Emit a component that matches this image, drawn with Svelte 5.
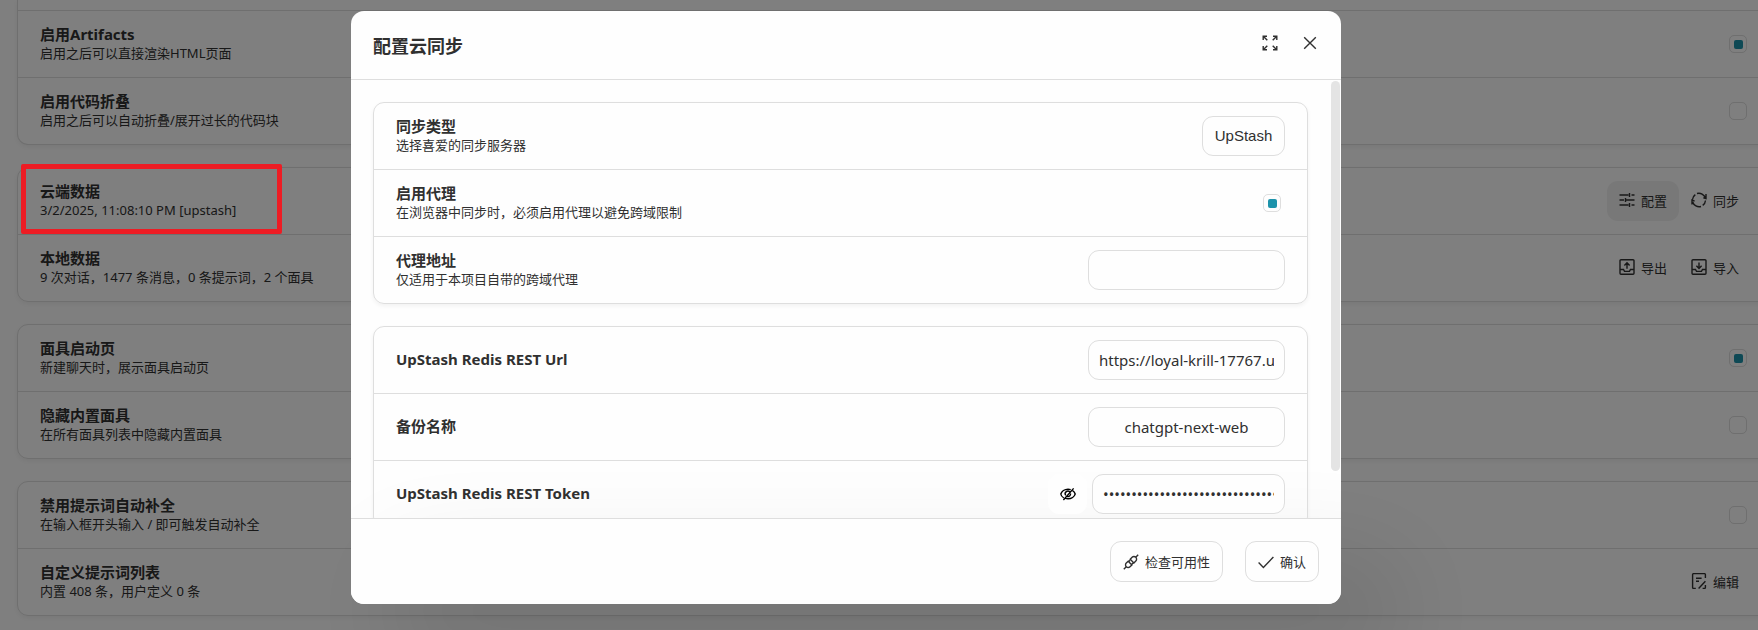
<script>
  let modalOpen = true;

  let syncType = 'UpStash';
  let useProxy = true;
  let proxyUrl = '';
  let restUrl = 'https://loyal-krill-17767.upstash.io';
  let backupName = 'chatgpt-next-web';
  let token = 'AUVnAAIjcDEwZTM5Yjg3ZmQ2NGE0OWQ';
  let showToken = false;

  let groups = [
    {
      continued: true,
      rows: [
        { id: 'artifacts', title: '启用Artifacts', sub: '启用之后可以直接渲染HTML页面', checked: true },
        { id: 'folding', title: '启用代码折叠', sub: '启用之后可以自动折叠/展开过长的代码块', checked: false }
      ]
    },
    {
      rows: [
        {
          id: 'cloud',
          title: '云端数据',
          sub: '3/2/2025, 11:08:10 PM [upstash]',
          marked: true,
          actions: [
            { icon: 'config', text: '配置', active: true },
            { icon: 'sync', text: '同步' }
          ]
        },
        {
          id: 'local',
          title: '本地数据',
          sub: '9 次对话，1477 条消息，0 条提示词，2 个面具',
          actions: [
            { icon: 'upload', text: '导出' },
            { icon: 'download', text: '导入' }
          ]
        }
      ]
    },
    {
      rows: [
        { id: 'splash', title: '面具启动页', sub: '新建聊天时，展示面具启动页', checked: true },
        { id: 'builtin', title: '隐藏内置面具', sub: '在所有面具列表中隐藏内置面具', checked: false }
      ]
    },
    {
      rows: [
        { id: 'autocomplete', title: '禁用提示词自动补全', sub: '在输入框开头输入 / 即可触发自动补全', checked: false },
        {
          id: 'prompts',
          title: '自定义提示词列表',
          sub: '内置 408 条，用户定义 0 条',
          actions: [{ icon: 'edit', text: '编辑' }]
        }
      ]
    }
  ];

  const icons = {
    config: 'M.5 3h9M12.500 3h3M10.500 1v4M.5 8h4.500M7 8h8.500M6.500 6v4M.5 13h9M12.500 13h3M10.500 11v4',
    sync: 'M1.500 7.500A6.600 6.600 0 0 1 4.300 2.600M6 1.500A6.700 6.700 0 0 1 14.300 6M15 2v4.500l-2.600-.7M14.500 8.500A6.600 6.600 0 0 1 11.700 13.400M10 14.500A6.700 6.700 0 0 1 1.700 10M1 12.500V8l2.600 1.200',
    upload: 'M2 .8h12a1 1 0 0 1 1 1v12.400a1 1 0 0 1-1 1H2a1 1 0 0 1-1-1V1.800a1 1 0 0 1 1-1zM1 10.500h3.500l1 1.900h5l1-1.900H15M8 9.800V4M5.400 6.400L8 3.800l2.600 2.600',
    download: 'M2 .8h12a1 1 0 0 1 1 1v12.400a1 1 0 0 1-1 1H2a1 1 0 0 1-1-1V1.800a1 1 0 0 1 1-1zM1 10.500h3.500l1 1.900h5l1-1.900H15M8 3.600v5.600M5.400 6.800L8 9.400l2.600-2.600',
    edit: 'M14.400 5V1.600a1 1 0 0 0-1-1H2.600a1 1 0 0 0-1 1v12.800a1 1 0 0 0 1 1h2.200M5 5.200h5.600M5 8.200h3M14.400 8.200l-6.800 7.200M11.600 15.400h1.800a1 1 0 0 0 1-1v-2.400',
    connect: 'M.8 15.200l2.200-2.200M13 3l2.200-2.200M7.200 5.200l1.900-1.900a2.600 2.600 0 0 1 3.700 0 2.600 2.600 0 0 1 0 3.700l-1.900 1.900zM5.200 7.200L3.300 9.100a2.600 2.600 0 0 0 0 3.700 2.600 2.600 0 0 0 3.700 0l1.900-1.900zM5.600 7.600L7 6.400M8.600 10.400L10 9',
    confirm: 'M.6 8.600l4.800 4.800L15.400 3',
    max: 'M1.200 5V1.200H5M1.500 1.500l3.800 3.800M11 1.200h3.800V5M14.500 1.500l-3.800 3.800M1.200 11v3.800H5M1.500 14.500l3.800-3.800M11 14.800h3.800V11M14.500 14.500l-3.800-3.800',
    close: 'M2.200 2.200l11.600 11.600M13.800 2.200L2.200 13.800'
  };
</script>

<svelte:head>
  <title>设置</title>
</svelte:head>

{#snippet icon(name)}
  <svg class="icon icon-{name}" viewBox="0 0 16 16" aria-hidden="true">
    <path d={icons[name]} />
  </svg>
{/snippet}

<main class="settings">
  {#each groups as group}
    <section class="list" class:continued={group.continued}>
      {#if group.continued}
        <div class="list-tail"></div>
      {/if}
      {#each group.rows as row}
        <div class="list-item">
          <div class="list-header">
            {#if row.actions}
              <div class="list-title">{row.title}</div>
            {:else}
              <label class="list-title" for={row.id}>{row.title}</label>
            {/if}
            <div class="list-sub">{row.sub}</div>
          </div>
          {#if row.actions}
            <div class="actions">
              {#each row.actions as action}
                <button class="icon-button" class:active={action.active} type="button">
                  {@render icon(action.icon)}
                  <span>{action.text}</span>
                </button>
              {/each}
            </div>
          {:else}
            <input id={row.id} type="checkbox" bind:checked={row.checked}>
          {/if}
          {#if row.marked}
            <div class="marker"></div>
          {/if}
        </div>
      {/each}
    </section>
  {/each}
</main>

{#if modalOpen}
  <div class="modal-mask">
    <div class="modal" role="dialog" aria-labelledby="modal-title">
      <header class="modal-header">
        <div class="modal-title" id="modal-title">配置云同步</div>
        <div class="modal-actions">
          <button class="plain" type="button" aria-label="最大化">{@render icon('max')}</button>
          <button class="plain" type="button" aria-label="关闭" onclick={() => (modalOpen = false)}>{@render icon('close')}</button>
        </div>
      </header>

      <div class="modal-body">
        <div class="modal-content">
          <section class="list">
            <div class="list-item">
              <div class="list-header">
                <label class="list-title" for="sync-type">同步类型</label>
                <div class="list-sub">选择喜爱的同步服务器</div>
              </div>
              <select id="sync-type" bind:value={syncType}>
                <option>UpStash</option>
                <option>WebDAV</option>
              </select>
            </div>
            <div class="list-item">
              <div class="list-header">
                <label class="list-title" for="use-proxy">启用代理</label>
                <div class="list-sub">在浏览器中同步时，必须启用代理以避免跨域限制</div>
              </div>
              <input id="use-proxy" type="checkbox" bind:checked={useProxy}>
            </div>
            <div class="list-item">
              <div class="list-header">
                <label class="list-title" for="proxy-url">代理地址</label>
                <div class="list-sub">仅适用于本项目自带的跨域代理</div>
              </div>
              <input id="proxy-url" class="field" type="text" bind:value={proxyUrl}>
            </div>
          </section>

          <section class="list">
            <div class="list-item">
              <div class="list-header">
                <label class="list-title" for="rest-url">UpStash Redis REST Url</label>
              </div>
              <input id="rest-url" class="field" type="text" bind:value={restUrl}>
            </div>
            <div class="list-item">
              <div class="list-header">
                <label class="list-title" for="backup-name">备份名称</label>
              </div>
              <input id="backup-name" class="field" type="text" bind:value={backupName}>
            </div>
            <div class="list-item">
              <div class="list-header">
                <label class="list-title" for="rest-token">UpStash Redis REST Token</label>
              </div>
              <div class="password">
                <button class="eye" type="button" aria-label="显示" onclick={() => (showToken = !showToken)}>
                  <svg class="icon" viewBox="0 0 16 16" aria-hidden="true">
                    <path d="M3.8 12C2.2 11 1 9.4.8 8 1.6 5.4 4.6 3.2 8 3.2c1 0 1.900.2 2.700.5M12.6 4.700C14 5.600 14.900 6.900 15.200 8c-.8 2.600-3.800 4.800-7.200 4.800-.9 0-1.700-.1-2.400-.4M13.600 2.400L3.400 14M10 6.200A2.600 2.600 0 0 0 5.700 9.300M7 10.400A2.600 2.600 0 0 0 10.500 7.500" />
                  </svg>
                </button>
                <input id="rest-token" class="field token" type={showToken ? 'text' : 'password'} value={token}>
              </div>
            </div>
          </section>
        </div>
        <div class="scroll-thumb"></div>
      </div>

      <footer class="modal-footer">
        <button class="icon-button bordered" type="button">
          {@render icon('connect')}
          <span>检查可用性</span>
        </button>
        <button class="icon-button bordered" type="button">
          {@render icon('confirm')}
          <span>确认</span>
        </button>
      </footer>
    </div>
  </div>
{/if}

<style>
:global(body) {
  background: #fefefe;
  color: #303030;
  font-family: "Noto Sans", "Noto Sans CJK SC", sans-serif;
  overflow: hidden;
}

button,
select,
input {
  box-sizing: border-box;
  margin: 0;
  color: inherit;
  outline: none;
}

button {
  border: none;
  background: transparent;
  font-family: inherit;
  cursor: pointer;
}

.icon {
  display: block;
  width: 16px;
  height: 16px;
  flex-shrink: 0;
  fill: none;
  stroke: currentColor;
  stroke-width: 1.4;
}

/* the list runs past the right edge of the window */
.settings {
  margin: 0 -16px 0 17px;
}

.list {
  border: 1px solid #dedede;
  border-radius: 11px;
  box-shadow: 0 2px 4px 0 rgba(0, 0, 0, 0.05);
  margin-bottom: 22px;
}

.list.continued {
  border-top: none;
  border-top-left-radius: 0;
  border-top-right-radius: 0;
}

.list-tail {
  height: 10px;
  border-bottom: 1px solid #dedede;
}

.list-item {
  position: relative;
  display: flex;
  align-items: center;
  justify-content: space-between;
  min-height: 44px;
  padding: 11px 22px;
  border-bottom: 1px solid #dedede;
}

.list-item:last-child {
  border-bottom: none;
}

.list-header {
  padding-bottom: 2px;
}

.list-title {
  display: block;
  font-size: 15px;
  font-weight: bold;
  line-height: 20px;
}

.list-sub {
  font-size: 13px;
  line-height: 18px;
}

.actions {
  display: flex;
}

.icon-button {
  display: flex;
  align-items: center;
  gap: 6px;
  height: 40px;
  padding: 0 12px 2px;
  border-radius: 11px;
  font-size: 13px;
}

.icon-button.active {
  background: #f0f0f0;
}

.icon-button.bordered {
  height: 41px;
  padding: 0 12px;
  border: 1px solid #dedede;
}

.marker {
  position: absolute;
  z-index: 20;
  top: -4px;
  left: 3px;
  width: 251px;
  height: 60px;
  border: 5px solid #ed1c24;
  border-radius: 2px;
  pointer-events: none;
}

input[type="checkbox"] {
  appearance: none;
  display: flex;
  align-items: center;
  justify-content: center;
  width: 18px;
  height: 18px;
  margin-right: 4px;
  border: 1px solid #dedede;
  border-radius: 5px;
}

input[type="checkbox"]:checked::after {
  content: "";
  width: 9px;
  height: 9px;
  border-radius: 2px;
  background: #1d93ab;
}

.modal-mask {
  position: fixed;
  z-index: 10;
  inset: 0;
  display: flex;
  align-items: flex-start;
  justify-content: center;
  padding: 11px 66px 0 0;
  background: rgba(0, 0, 0, 0.5);
}

.modal {
  width: 990px;
  max-width: 90%;
  border-radius: 13px;
  background: #fefefe;
}

.modal-header {
  display: flex;
  justify-content: space-between;
  padding: 23px 22px 21px;
  border-bottom: 1px solid #dedede;
}

.modal-title {
  font-size: 18px;
  font-weight: bold;
  line-height: 24px;
}

.modal-actions {
  display: flex;
  align-items: flex-start;
  gap: 22px;
}

.plain {
  padding: 1px;
}

.modal-body {
  position: relative;
}

.modal-content {
  box-sizing: border-box;
  height: calc(100vh - 192px);
  padding: 22px 33px 22px 22px;
  overflow-x: hidden;
  overflow-y: scroll;
  scrollbar-width: none;
}

.scroll-thumb {
  position: absolute;
  top: 1px;
  right: 1px;
  width: 9px;
  height: 89%;
  border-radius: 5px;
  background: rgba(0, 0, 0, 0.1);
}

select {
  appearance: none;
  width: 83px;
  height: 40px;
  padding: 0 11px 2px;
  border: 1px solid #dedede;
  border-radius: 11px;
  background: #fefefe;
  font-family: "Liberation Sans", sans-serif;
  font-size: 15px;
  text-align: center;
}

.field {
  width: 197px;
  height: 40px;
  padding: 0 10px;
  border: 1px solid #dedede;
  border-radius: 11px;
  background: #fefefe;
  font-family: inherit;
  font-size: 15px;
  text-align: center;
}

.password {
  display: flex;
  gap: 5px;
}

.eye {
  display: flex;
  align-items: center;
  justify-content: center;
  width: 39px;
  height: 40px;
  border-radius: 11px;
  background: #fefefe;
  color: #000000;
}

.field.token {
  width: 193px;
}

/* the shadow reaches up behind the last rows of the content */
.modal-footer {
  display: flex;
  justify-content: flex-end;
  gap: 22px;
  padding: 22px;
  border-top: 1px solid #dedede;
  border-radius: 0 0 13px 13px;
  background: #fefefe;
  box-shadow: 50px 50px 100px 10px rgba(0, 0, 0, 0.1);
}
</style>
